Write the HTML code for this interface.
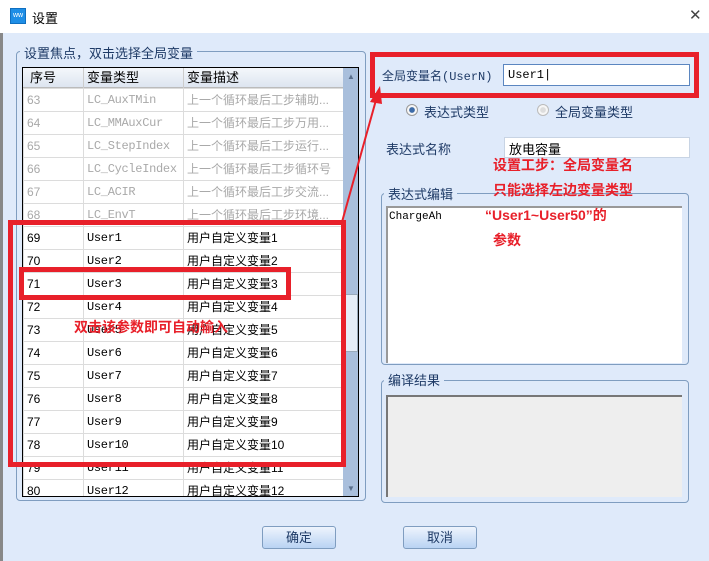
<!DOCTYPE html><html><head><meta charset="utf-8"><style>
*{margin:0;padding:0;box-sizing:border-box}
body{width:709px;height:561px;overflow:hidden;background:#dfeafa;font-family:"Liberation Sans","Noto Sans CJK SC",sans-serif;font-size:12px;color:#1e3a66;position:relative}
.a{position:absolute}
.mono{font-family:"Liberation Mono","Noto Sans CJK SC",monospace}
.gb{position:absolute;border:1px solid #7f9dc0;border-radius:4px}
.gl{position:absolute;background:#dfeafa;padding:0 4px;font-size:13px;color:#1e3a66}
table{border-collapse:collapse;table-layout:fixed}
td{height:23px;line-height:21px;vertical-align:middle;border:1px solid #dcdcdc;padding-left:3px;font-size:12px;color:#000;white-space:nowrap;overflow:hidden}
td.m{font-family:"Liberation Mono",monospace;font-size:12px;letter-spacing:-0.3px}
tr.g td{color:#a9a9a9}
.red{border:5px solid #e8202a;position:absolute}
.rt{color:#e8202a;font-weight:bold;font-size:14px;position:absolute;white-space:nowrap}
.btn{position:absolute;width:74px;height:23px;border:1px solid #7f9dc0;border-radius:3px;background:linear-gradient(#eef4fd,#b9d3f3);text-align:center;line-height:21px;font-size:13px;color:#1e3a66}
</style></head><body>
<div class="a" style="left:0;top:0;width:709px;height:33px;background:#fff"></div>
<div class="a" style="left:10px;top:8px;width:16px;height:16px;background:#1e8ee6;border:1px solid #0f6fc0;color:#fff;font-size:7px;line-height:14px;text-align:center">ww</div>
<div class="a" style="left:32px;top:8px;font-size:13px;color:#000">设置</div>
<div class="a" style="left:689px;top:6px;font-size:15px;color:#444">✕</div>
<div class="a" style="left:0;top:33px;width:3px;height:528px;background:#888"></div>

<div class="gb" style="left:16px;top:51px;width:350px;height:450px"></div>
<div class="gl" style="left:20px;top:43px">设置焦点，双击选择全局变量</div>
<div class="a" style="left:22px;top:67px;width:337px;height:430px;border:1px solid #000;background:#fff;overflow:hidden">
<div class="a" style="left:0;top:0;width:320px;height:20px;background:linear-gradient(#f4f7fb,#dde5f0);border-bottom:1px solid #bbb;font-size:13px;color:#000;line-height:20px">
<span class="a" style="left:7px;top:0">序号</span><span class="a" style="left:64px;top:0">变量类型</span><span class="a" style="left:164px;top:0">变量描述</span></div>
<div class="a" style="left:60px;top:0;width:1px;height:20px;background:#ccc"></div>
<div class="a" style="left:160px;top:0;width:1px;height:20px;background:#ccc"></div>
<table class="a" style="left:0;top:20px;width:320px">
<col style="width:60px"><col style="width:100px"><col style="width:160px">
<tr class="g"><td>63</td><td class="m">LC_AuxTMin</td><td>上一个循环最后工步辅助...</td></tr>
<tr class="g"><td>64</td><td class="m">LC_MMAuxCur</td><td>上一个循环最后工步万用...</td></tr>
<tr class="g"><td>65</td><td class="m">LC_StepIndex</td><td>上一个循环最后工步运行...</td></tr>
<tr class="g"><td>66</td><td class="m">LC_CycleIndex</td><td>上一个循环最后工步循环号</td></tr>
<tr class="g"><td>67</td><td class="m">LC_ACIR</td><td>上一个循环最后工步交流...</td></tr>
<tr class="g"><td>68</td><td class="m">LC_EnvT</td><td>上一个循环最后工步环境...</td></tr>
<tr><td>69</td><td class="m">User1</td><td>用户自定义变量1</td></tr>
<tr><td>70</td><td class="m">User2</td><td>用户自定义变量2</td></tr>
<tr><td>71</td><td class="m">User3</td><td>用户自定义变量3</td></tr>
<tr><td>72</td><td class="m">User4</td><td>用户自定义变量4</td></tr>
<tr><td>73</td><td class="m">User5</td><td>用户自定义变量5</td></tr>
<tr><td>74</td><td class="m">User6</td><td>用户自定义变量6</td></tr>
<tr><td>75</td><td class="m">User7</td><td>用户自定义变量7</td></tr>
<tr><td>76</td><td class="m">User8</td><td>用户自定义变量8</td></tr>
<tr><td>77</td><td class="m">User9</td><td>用户自定义变量9</td></tr>
<tr><td>78</td><td class="m">User10</td><td>用户自定义变量10</td></tr>
<tr><td>79</td><td class="m">User11</td><td>用户自定义变量11</td></tr>
<tr><td>80</td><td class="m">User12</td><td>用户自定义变量12</td></tr>
</table>
<div class="a" style="left:320px;top:0;width:16px;height:430px;background:#a9bfdc"></div>
<div class="a" style="left:324px;top:4px;font-size:8px;color:#5a6f8c">▲</div>
<div class="a" style="left:324px;top:416px;font-size:8px;color:#5a6f8c">▼</div>
<div class="a" style="left:321px;top:226px;width:14px;height:58px;background:#e6eef8;border:1px solid #9ab"></div>
</div>

<div class="red" style="left:8px;top:220px;width:338px;height:247px"></div>
<div class="red" style="left:19px;top:267px;width:272px;height:33px"></div>
<div class="rt" style="left:74px;top:317px">双击该参数即可自动输入</div>
<svg class="a" style="left:0;top:0" width="709" height="561"><line x1="342" y1="222" x2="376" y2="100" stroke="#e8202a" stroke-width="2"/><polygon points="380,86 370,102 382,104" fill="#e8202a"/></svg>

<div class="red" style="left:370px;top:52px;width:329px;height:46px"></div>
<div class="a" style="left:382px;top:67px;font-size:12px">全局变量名<span class="mono">(UserN)</span></div>
<div class="a mono" style="left:503px;top:64px;width:187px;height:22px;background:#fff;border:1px solid #5b86c0;color:#000;padding:3px 4px">User1|</div>
<div class="a" style="left:406px;top:104px;width:12px;height:12px;border-radius:50%;border:1px solid #999;background:radial-gradient(#3d6ba8 35%,#f6f6f6 45%)"></div>
<div class="a" style="left:424px;top:102px;font-size:13px">表达式类型</div>
<div class="a" style="left:537px;top:104px;width:12px;height:12px;border-radius:50%;border:1px solid #bbb;background:radial-gradient(#ddd 35%,#f6f6f6 45%)"></div>
<div class="a" style="left:555px;top:102px;font-size:13px">全局变量类型</div>
<div class="a" style="left:386px;top:139px;font-size:13px">表达式名称</div>
<div class="a" style="left:504px;top:137px;width:186px;height:21px;background:#fff;border:1px solid #c8d4e4;color:#000;padding:1px 4px;font-size:13px">放电容量</div>

<div class="gb" style="left:381px;top:193px;width:308px;height:172px"></div>
<div class="gl" style="left:384px;top:184px">表达式编辑</div>
<div class="a mono" style="left:386px;top:206px;width:296px;height:157px;background:#fff;border-top:2px solid #999;border-left:2px solid #999;padding:3px 1px;color:#000;font-size:11px">ChargeAh</div>
<div class="rt" style="left:493px;top:155px">设置工步：全局变量名</div>
<div class="rt" style="left:493px;top:180px">只能选择左边变量类型</div>
<div class="rt" style="left:485px;top:205px">“User1~User50”的</div>
<div class="rt" style="left:493px;top:230px">参数</div>

<div class="gb" style="left:381px;top:380px;width:308px;height:123px"></div>
<div class="gl" style="left:384px;top:370px">编译结果</div>
<div class="a" style="left:386px;top:395px;width:296px;height:102px;background:#eeeeee;border-top:2px solid #777;border-left:2px solid #777"></div>

<div class="btn" style="left:262px;top:526px">确定</div>
<div class="btn" style="left:403px;top:526px">取消</div>
</body></html>
